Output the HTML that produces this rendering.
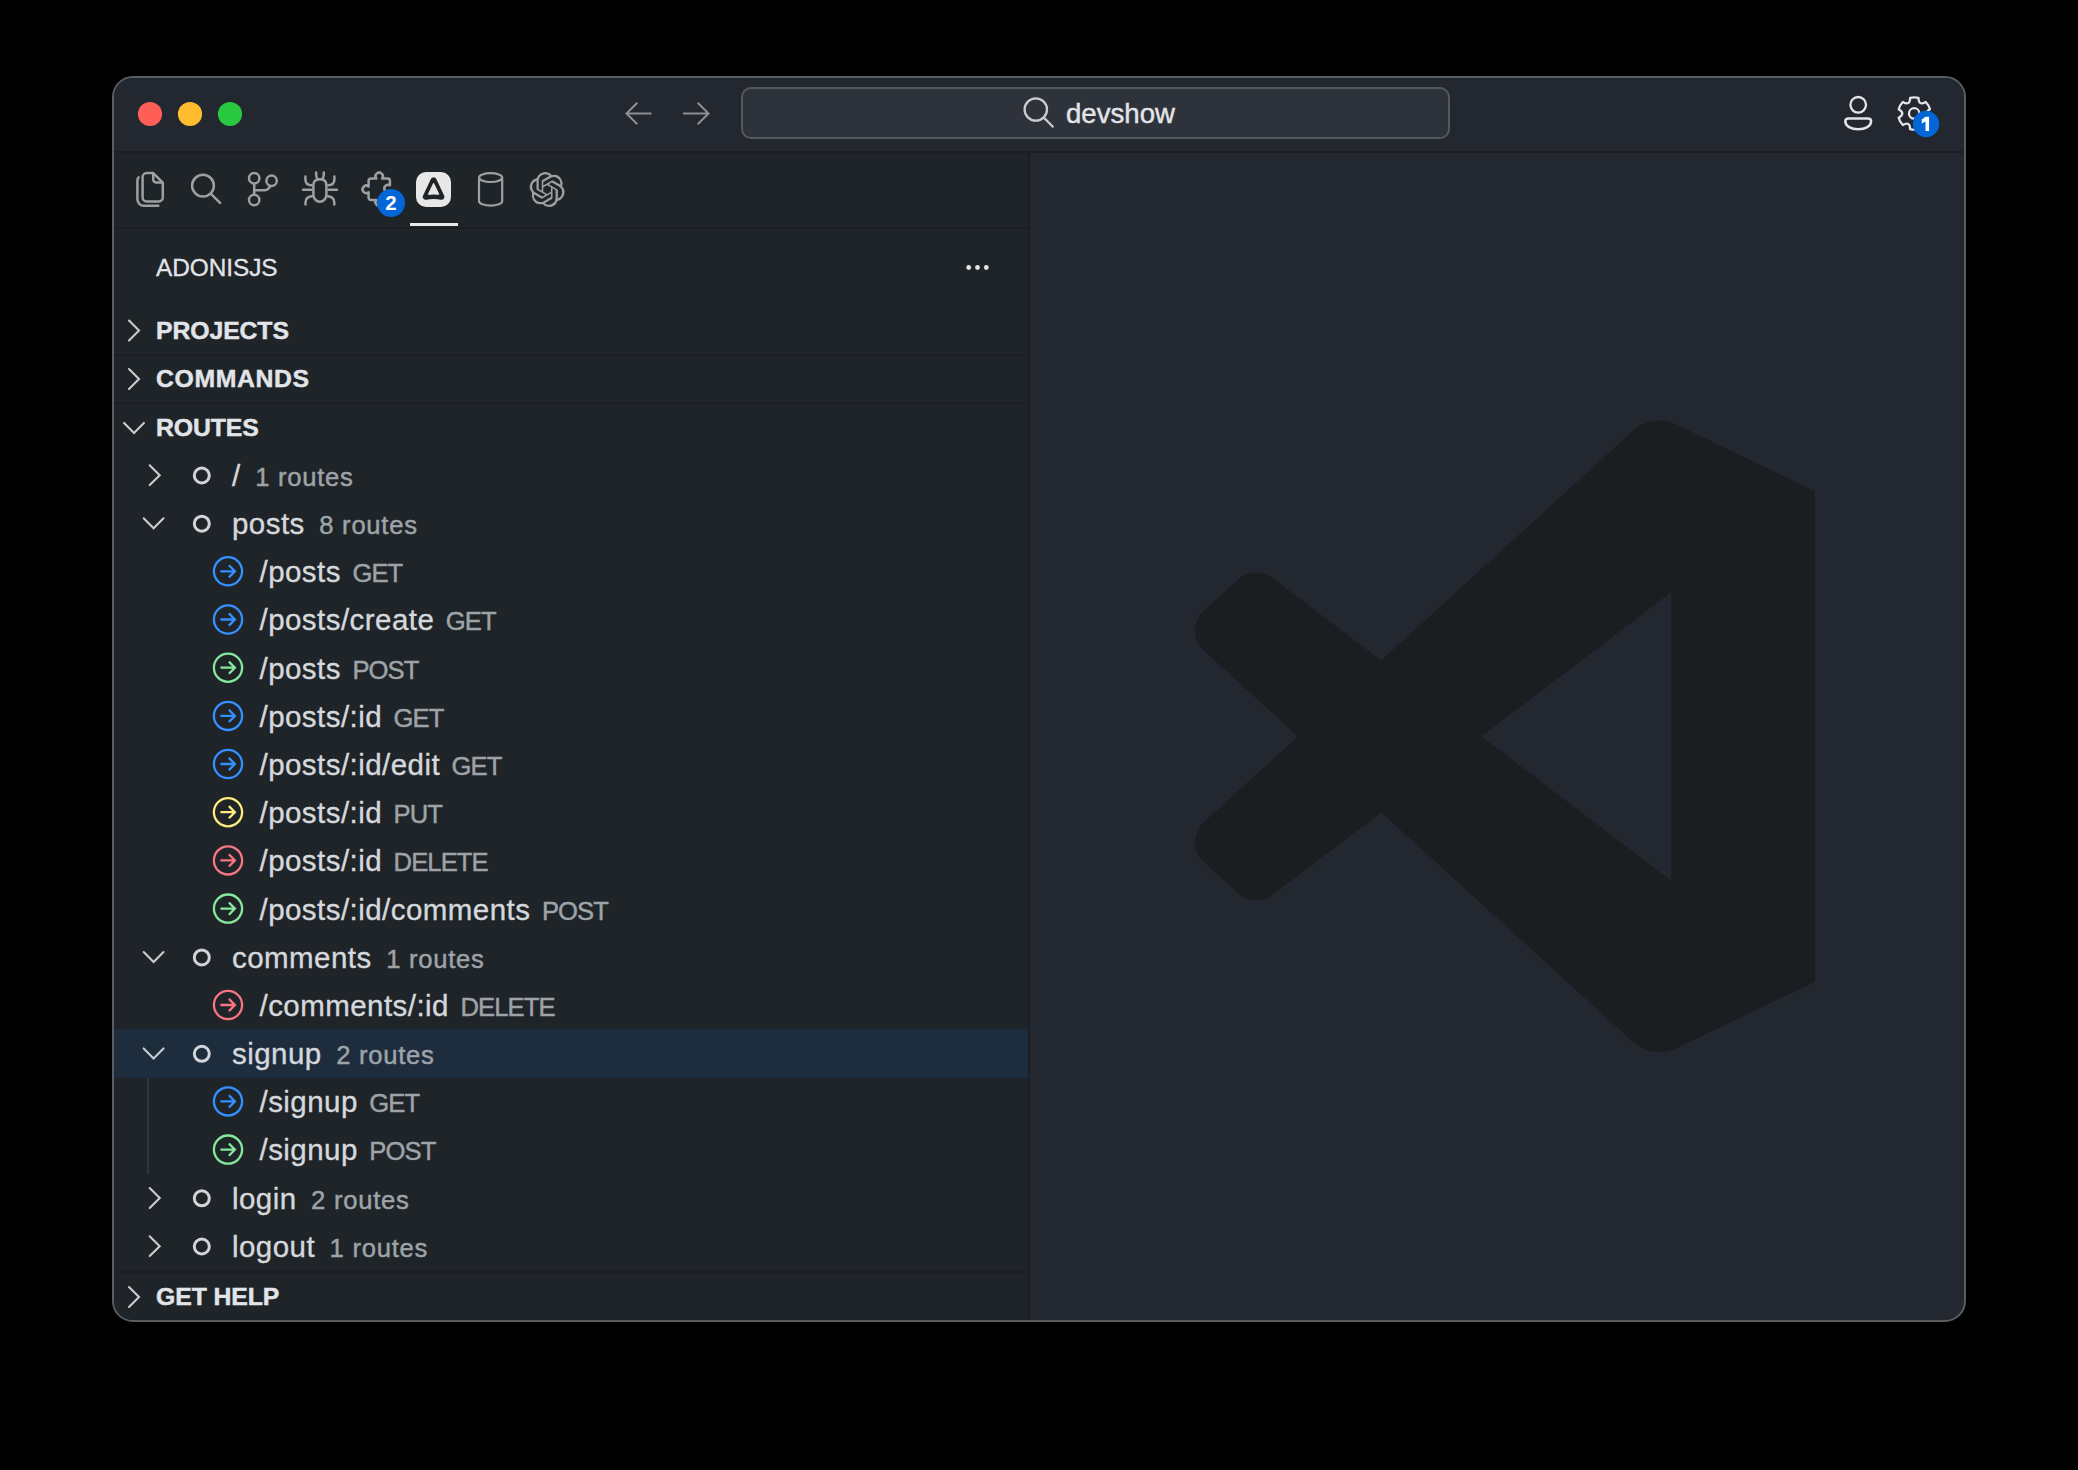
<!DOCTYPE html>
<html><head><meta charset="utf-8"><style>
html,body{margin:0;padding:0;background:#000;width:2078px;height:1470px;overflow:hidden}
*{box-sizing:border-box}
body{font-family:"Liberation Sans", sans-serif}
#win{position:absolute;left:112px;top:76px;width:1854px;height:1246px;border:2px solid #595d62;border-radius:21px;overflow:hidden;background:#23272f}
#in{position:absolute;left:-114px;top:-78px;width:2078px;height:1470px}
#in div{font-family:"Liberation Sans", sans-serif}
</style></head><body>
<div id="win"><div id="in">
<div style="position:absolute;left:114px;top:78px;width:1850px;height:73px;background:#23272f"></div>
<div style="position:absolute;left:114px;top:151px;width:1850px;height:2px;background:#1b1f23"></div>
<div style="position:absolute;left:114px;top:153px;width:914px;height:1167px;background:#1f2428"></div>
<div style="position:absolute;left:1028px;top:153px;width:2px;height:1167px;background:#1b1f23"></div>
<div style="position:absolute;left:114px;top:227px;width:914px;height:2px;background:#1b1f23"></div>
<div style="position:absolute;left:114px;top:354px;width:914px;height:1.5px;background:#1b1f23"></div>
<div style="position:absolute;left:114px;top:402px;width:914px;height:1.5px;background:#1b1f23"></div>
<div style="position:absolute;left:114px;top:1271px;width:914px;height:1.5px;background:#1b1f23"></div>
<div style="position:absolute;left:741px;top:87px;width:709px;height:52px;border:2px solid #54585f;border-radius:10px;background:#2e323a"></div>
<div style="position:absolute;left:114px;top:1029.38px;width:914px;height:48.19px;background:#1d2d3e"></div>
<div style="position:absolute;left:1066px;top:83.60px;height:60px;line-height:60px;font-size:27.6px;font-weight:400;color:#e1e4e8;white-space:nowrap;letter-spacing:0px;-webkit-text-stroke:0.45px #e1e4e8">devshow</div>
<div style="position:absolute;left:156px;top:237.80px;height:60px;line-height:60px;font-size:24.4px;font-weight:400;color:#e1e4e8;white-space:nowrap;letter-spacing:-0.05px;-webkit-text-stroke:0.3px #e1e4e8">ADONISJS</div>
<div style="position:absolute;left:156px;top:300.90px;height:60px;line-height:60px;font-size:24.8px;font-weight:700;color:#e1e4e8;white-space:nowrap;letter-spacing:-0.1px;-webkit-text-stroke:0.45px #e1e4e8">PROJECTS</div>
<div style="position:absolute;left:156px;top:349.10px;height:60px;line-height:60px;font-size:24.8px;font-weight:700;color:#e1e4e8;white-space:nowrap;letter-spacing:0.6px;-webkit-text-stroke:0.45px #e1e4e8">COMMANDS</div>
<div style="position:absolute;left:156px;top:397.60px;height:60px;line-height:60px;font-size:24.8px;font-weight:700;color:#e1e4e8;white-space:nowrap;letter-spacing:-0.1px;-webkit-text-stroke:0.45px #e1e4e8">ROUTES</div>
<div style="position:absolute;left:156px;top:1267.10px;height:60px;line-height:60px;font-size:24.8px;font-weight:700;color:#e1e4e8;white-space:nowrap;letter-spacing:-0.1px;-webkit-text-stroke:0.45px #e1e4e8">GET HELP</div>
<div style="position:absolute;left:232px;top:445.80px;height:60px;line-height:60px;white-space:nowrap;color:#d5d8dc"><span style="font-size:29.5px;letter-spacing:0.45px;-webkit-text-stroke:0.35px #d5d8dc">/</span><span style="font-size:25.6px;color:#9ea3a8;margin-left:14.5px;letter-spacing:0.75px;-webkit-text-stroke:0.45px #9ea3a8">1 routes</span></div><div style="position:absolute;left:232px;top:493.99px;height:60px;line-height:60px;white-space:nowrap;color:#d5d8dc"><span style="font-size:29.5px;letter-spacing:0.45px;-webkit-text-stroke:0.35px #d5d8dc">posts</span><span style="font-size:25.6px;color:#9ea3a8;margin-left:14.5px;letter-spacing:0.75px;-webkit-text-stroke:0.45px #9ea3a8">8 routes</span></div><div style="position:absolute;left:259.5px;top:542.18px;height:60px;line-height:60px;white-space:nowrap;color:#d5d8dc"><span style="font-size:29.5px;letter-spacing:0.45px;-webkit-text-stroke:0.35px #d5d8dc">/posts</span><span style="font-size:25.6px;color:#9ea3a8;margin-left:11.5px;letter-spacing:-0.9px;-webkit-text-stroke:0.45px #9ea3a8">GET</span></div><div style="position:absolute;left:259.5px;top:590.37px;height:60px;line-height:60px;white-space:nowrap;color:#d5d8dc"><span style="font-size:29.5px;letter-spacing:0.45px;-webkit-text-stroke:0.35px #d5d8dc">/posts/create</span><span style="font-size:25.6px;color:#9ea3a8;margin-left:11.5px;letter-spacing:-0.9px;-webkit-text-stroke:0.45px #9ea3a8">GET</span></div><div style="position:absolute;left:259.5px;top:638.56px;height:60px;line-height:60px;white-space:nowrap;color:#d5d8dc"><span style="font-size:29.5px;letter-spacing:0.45px;-webkit-text-stroke:0.35px #d5d8dc">/posts</span><span style="font-size:25.6px;color:#9ea3a8;margin-left:11.5px;letter-spacing:-0.9px;-webkit-text-stroke:0.45px #9ea3a8">POST</span></div><div style="position:absolute;left:259.5px;top:686.75px;height:60px;line-height:60px;white-space:nowrap;color:#d5d8dc"><span style="font-size:29.5px;letter-spacing:0.45px;-webkit-text-stroke:0.35px #d5d8dc">/posts/:id</span><span style="font-size:25.6px;color:#9ea3a8;margin-left:11.5px;letter-spacing:-0.9px;-webkit-text-stroke:0.45px #9ea3a8">GET</span></div><div style="position:absolute;left:259.5px;top:734.94px;height:60px;line-height:60px;white-space:nowrap;color:#d5d8dc"><span style="font-size:29.5px;letter-spacing:0.45px;-webkit-text-stroke:0.35px #d5d8dc">/posts/:id/edit</span><span style="font-size:25.6px;color:#9ea3a8;margin-left:11.5px;letter-spacing:-0.9px;-webkit-text-stroke:0.45px #9ea3a8">GET</span></div><div style="position:absolute;left:259.5px;top:783.13px;height:60px;line-height:60px;white-space:nowrap;color:#d5d8dc"><span style="font-size:29.5px;letter-spacing:0.45px;-webkit-text-stroke:0.35px #d5d8dc">/posts/:id</span><span style="font-size:25.6px;color:#9ea3a8;margin-left:11.5px;letter-spacing:-0.9px;-webkit-text-stroke:0.45px #9ea3a8">PUT</span></div><div style="position:absolute;left:259.5px;top:831.32px;height:60px;line-height:60px;white-space:nowrap;color:#d5d8dc"><span style="font-size:29.5px;letter-spacing:0.45px;-webkit-text-stroke:0.35px #d5d8dc">/posts/:id</span><span style="font-size:25.6px;color:#9ea3a8;margin-left:11.5px;letter-spacing:-0.9px;-webkit-text-stroke:0.45px #9ea3a8">DELETE</span></div><div style="position:absolute;left:259.5px;top:879.51px;height:60px;line-height:60px;white-space:nowrap;color:#d5d8dc"><span style="font-size:29.5px;letter-spacing:0.45px;-webkit-text-stroke:0.35px #d5d8dc">/posts/:id/comments</span><span style="font-size:25.6px;color:#9ea3a8;margin-left:11.5px;letter-spacing:-0.9px;-webkit-text-stroke:0.45px #9ea3a8">POST</span></div><div style="position:absolute;left:232px;top:927.70px;height:60px;line-height:60px;white-space:nowrap;color:#d5d8dc"><span style="font-size:29.5px;letter-spacing:0.45px;-webkit-text-stroke:0.35px #d5d8dc">comments</span><span style="font-size:25.6px;color:#9ea3a8;margin-left:14.5px;letter-spacing:0.75px;-webkit-text-stroke:0.45px #9ea3a8">1 routes</span></div><div style="position:absolute;left:259.5px;top:975.89px;height:60px;line-height:60px;white-space:nowrap;color:#d5d8dc"><span style="font-size:29.5px;letter-spacing:0.45px;-webkit-text-stroke:0.35px #d5d8dc">/comments/:id</span><span style="font-size:25.6px;color:#9ea3a8;margin-left:11.5px;letter-spacing:-0.9px;-webkit-text-stroke:0.45px #9ea3a8">DELETE</span></div><div style="position:absolute;left:232px;top:1024.08px;height:60px;line-height:60px;white-space:nowrap;color:#d5d8dc"><span style="font-size:29.5px;letter-spacing:0.45px;-webkit-text-stroke:0.35px #d5d8dc">signup</span><span style="font-size:25.6px;color:#9ea3a8;margin-left:14.5px;letter-spacing:0.75px;-webkit-text-stroke:0.45px #9ea3a8">2 routes</span></div><div style="position:absolute;left:259.5px;top:1072.27px;height:60px;line-height:60px;white-space:nowrap;color:#d5d8dc"><span style="font-size:29.5px;letter-spacing:0.45px;-webkit-text-stroke:0.35px #d5d8dc">/signup</span><span style="font-size:25.6px;color:#9ea3a8;margin-left:11.5px;letter-spacing:-0.9px;-webkit-text-stroke:0.45px #9ea3a8">GET</span></div><div style="position:absolute;left:259.5px;top:1120.46px;height:60px;line-height:60px;white-space:nowrap;color:#d5d8dc"><span style="font-size:29.5px;letter-spacing:0.45px;-webkit-text-stroke:0.35px #d5d8dc">/signup</span><span style="font-size:25.6px;color:#9ea3a8;margin-left:11.5px;letter-spacing:-0.9px;-webkit-text-stroke:0.45px #9ea3a8">POST</span></div><div style="position:absolute;left:232px;top:1168.65px;height:60px;line-height:60px;white-space:nowrap;color:#d5d8dc"><span style="font-size:29.5px;letter-spacing:0.45px;-webkit-text-stroke:0.35px #d5d8dc">login</span><span style="font-size:25.6px;color:#9ea3a8;margin-left:14.5px;letter-spacing:0.75px;-webkit-text-stroke:0.45px #9ea3a8">2 routes</span></div><div style="position:absolute;left:232px;top:1216.84px;height:60px;line-height:60px;white-space:nowrap;color:#d5d8dc"><span style="font-size:29.5px;letter-spacing:0.45px;-webkit-text-stroke:0.35px #d5d8dc">logout</span><span style="font-size:25.6px;color:#9ea3a8;margin-left:14.5px;letter-spacing:0.75px;-webkit-text-stroke:0.45px #9ea3a8">1 routes</span></div>
<svg width="2078" height="1470" style="position:absolute;left:0;top:0">
<defs><clipPath id="lpclip"><rect x="1030" y="153" width="785" height="1167"/></clipPath></defs>
<g clip-path="url(#lpclip)"><path d="M100 12.51 75.86.87a6.23 6.23 0 0 0-7.1 1.2L29.35 38.04 12.18 25.01a4.16 4.16 0 0 0-5.32.24l-5.5 5a4.17 4.17 0 0 0 0 6.16L16.24 50 1.36 63.58a4.17 4.17 0 0 0 0 6.16l5.5 5a4.16 4.16 0 0 0 5.32.24l17.17-13.03 39.41 35.97a6.22 6.22 0 0 0 7.1 1.2L100 87.52V12.51zM75.02 72.7 45.11 50l29.91-22.7z" transform="translate(1194.9 419.0) scale(6.348)" fill="#1b1e21" fill-rule="evenodd"/></g>
<!-- traffic lights -->
<circle cx="150" cy="114" r="12.1" fill="#ff5f57"/>
<circle cx="190" cy="114" r="12.1" fill="#febc2e"/>
<circle cx="230" cy="114" r="12.1" fill="#28c840"/>
<!-- nav arrows -->
<g fill="none" stroke="#8c8f93" stroke-width="2" stroke-linecap="butt">
<path d="M626.5 113.5 H651.5 M637.3 102.7 L626.5 113.5 L637.3 124.3"/>
<path d="M708.5 113.5 H683 M697.7 102.7 L708.5 113.5 L697.7 124.3"/>
</g>
<!-- magnifier -->
<g fill="none" stroke="#c9cbce" stroke-width="2.3"><circle cx="1035.8" cy="109.5" r="11.2"/><path d="M1043.8 117.6 L1053.4 127.2"/></g>
<!-- account -->
<g fill="none" stroke="#e1e4e8" stroke-width="2.3"><circle cx="1858.2" cy="104.8" r="7.8"/>
<path stroke-width="2.5" d="M1848.2 118.4 H1868.2 A2.9 2.9 0 0 1 1871.1 121.3 C1871.1 126.3 1865.3 129.3 1858.2 129.3 C1851.1 129.3 1845.3 126.3 1845.3 121.3 A2.9 2.9 0 0 1 1848.2 118.4 Z"/></g>
<!-- gear -->
<g fill="none" stroke="#e1e4e8" stroke-width="2.3" stroke-linejoin="round"><path d="M1910.11 97.85 A16.2 16.2 0 0 1 1918.49 97.85 Q1918.45 106.31 1925.76 102.04 A16.2 16.2 0 0 1 1929.95 109.31 Q1922.60 113.50 1929.95 117.69 A16.2 16.2 0 0 1 1925.76 124.96 Q1918.45 120.69 1918.49 129.15 A16.2 16.2 0 0 1 1910.11 129.15 Q1910.15 120.69 1902.84 124.96 A16.2 16.2 0 0 1 1898.65 117.69 Q1906.00 113.50 1898.65 109.31 A16.2 16.2 0 0 1 1902.84 102.04 Q1910.15 106.31 1910.11 97.85 Z"/><circle cx="1914.2" cy="113.4" r="5.2"/></g>
<circle cx="1926" cy="124" r="13.2" fill="#0366d6"/><path d="M1921.8 119.6 L1925.6 116.8 H1929.1 V131 H1925.5 V121.4 L1921.8 123.6 Z" fill="#fff"/>

<!-- activity icons -->
<g fill="none" stroke="#9da0a3" stroke-width="2.5" stroke-linejoin="round">
<path d="M146.6 173.1 H153.2 L162.8 182.7 V197.4 A4 4 0 0 1 158.8 201.4 H146.6 A4 4 0 0 1 142.6 197.4 V177.1 A4 4 0 0 1 146.6 173.1 Z"/>
<path d="M153.2 173.1 V179.5 A3 3 0 0 0 156.2 182.5 H162.8"/>
<path stroke-linecap="round" d="M138.6 177.4 Q137.4 178.6 137.4 180.6 V199.3 A6.5 6.5 0 0 0 143.9 205.8 H158.3"/>
<circle cx="203" cy="185.7" r="10.9"/><path d="M211 193.8 L220.8 203.6"/>
<circle cx="254.2" cy="178.3" r="5.2"/><circle cx="254.2" cy="200" r="5.2"/><circle cx="271.6" cy="180.8" r="5.2"/>
<path d="M254.2 183.5 V194.8 M254.2 190.3 H264.5 Q267 190.3 268.5 188.5 L270.6 185.9"/>
<path d="M313.4 185.2 Q313.4 179.3 319.9 179.3 Q326.4 179.3 326.4 185.2 V194.6 A6.5 7.2 0 0 1 313.4 194.6 Z"/>
<path stroke-linecap="round" d="M316.1 172.6 Q316 177.6 317.9 179.3 M323.8 172.6 Q323.9 177.6 322 179.3 M303 189.8 H311.5 M328.4 189.8 H337 M305.4 176.4 V179.5 Q305.5 185 311.6 185.3 M334.4 176.4 V179.5 Q334.3 185 328.2 185.3 M311.8 196.3 Q305.6 196.8 305.5 202.5 V204.5 M328 196.3 Q334.2 196.8 334.3 202.5 V204.5"/>
<path d="M370.8 178.6 H376.3 A3.7 3.7 0 1 1 382.1 178.6 H387.7 A2.2 2.2 0 0 1 389.9 180.8 V185.3 A3.7 3.7 0 1 0 389.9 191.7 V197.7 A2.2 2.2 0 0 1 387.7 199.9 H382.1 A3.7 3.7 0 1 1 376.3 199.9 H370.8 A2.2 2.2 0 0 1 368.6 197.7 V192.2 A3.7 3.7 0 1 1 368.6 186.4 V180.8 A2.2 2.2 0 0 1 370.8 178.6 Z"/>
<path stroke-width="2.2" d="M490.6 177.6 m-11.6 0 a11.6 4.4 0 1 0 23.2 0 a11.6 4.4 0 1 0 -23.2 0 M479 177.6 V201.2 A11.6 4.4 0 0 0 502.2 201.2 V177.6"/>
</g>
<!-- openai -->
<g transform="translate(529.6 172) scale(1.46)"><path d="M22.2819 9.8211a5.9847 5.9847 0 0 0-.5157-4.9108 6.0462 6.0462 0 0 0-6.5098-2.9A6.0651 6.0651 0 0 0 4.9807 4.1818a5.9847 5.9847 0 0 0-3.9977 2.9 6.0462 6.0462 0 0 0 .7427 7.0966 5.98 5.98 0 0 0 .511 4.9107 6.051 6.051 0 0 0 6.5146 2.9001A5.9847 5.9847 0 0 0 13.2599 24a6.0557 6.0557 0 0 0 5.7718-4.2058 5.9894 5.9894 0 0 0 3.9977-2.9001 6.0557 6.0557 0 0 0-.7475-7.0729zm-9.022 12.6081a4.4755 4.4755 0 0 1-2.8764-1.0408l.1419-.0804 4.7783-2.7582a.7948.7948 0 0 0 .3927-.6813v-6.7369l2.02 1.1686a.071.071 0 0 1 .038.052v5.5826a4.504 4.504 0 0 1-4.4945 4.4944zm-9.6607-4.1254a4.4708 4.4708 0 0 1-.5346-3.0137l.142.0852 4.783 2.7582a.7712.7712 0 0 0 .7806 0l5.8428-3.3685v2.3324a.0804.0804 0 0 1-.0332.0615L9.74 19.9502a4.4992 4.4992 0 0 1-6.1408-1.6464zM2.3408 7.8956a4.485 4.485 0 0 1 2.3655-1.9728V11.6a.7664.7664 0 0 0 .3879.6765l5.8144 3.3543-2.0201 1.1685a.0757.0757 0 0 1-.071 0l-4.8303-2.7865A4.504 4.504 0 0 1 2.3408 7.872zm16.5963 3.8558L13.1038 8.364 15.1192 7.2a.0757.0757 0 0 1 .071 0l4.8303 2.7913a4.4944 4.4944 0 0 1-.6765 8.1042v-5.6772a.79.79 0 0 0-.407-.667zm2.0107-3.0231l-.142-.0852-4.7735-2.7818a.7759.7759 0 0 0-.7854 0L9.409 9.2297V6.8974a.0662.0662 0 0 1 .0284-.0615l4.8303-2.7866a4.4992 4.4992 0 0 1 6.6802 4.66zM8.3065 12.863l-2.02-1.1638a.0804.0804 0 0 1-.038-.0567V6.0742a4.4992 4.4992 0 0 1 7.3757-3.4537l-.142.0805L8.704 5.459a.7948.7948 0 0 0-.3927.6813zm1.0976-2.3654l2.602-1.4998 2.6069 1.4998v2.9994l-2.5974 1.4997-2.6067-1.4997Z" fill="#9da0a3"/></g>
<!-- adonis -->
<rect x="416" y="172" width="35" height="35" rx="10" fill="#e7e7e7"/>
<path d="M433.6 180.4 L425.8 196.8 Q433.6 195.2 441.4 196.8 Z" fill="#1f2428" stroke="#1f2428" stroke-width="6" stroke-linejoin="round"/><path d="M433.6 183.5 L428.5 194.3 Q433.6 193.6 438.7 194.3 Z" fill="#e7e7e7" stroke="#e7e7e7" stroke-width="1.1" stroke-linejoin="round"/>
<circle cx="391" cy="203" r="14" fill="#0366d6"/>

<rect x="410" y="223" width="48" height="3" fill="#e7e7e7"/>
<!-- ellipsis -->
<circle cx="968.7" cy="267.5" r="2.4" fill="#e1e4e8"/><circle cx="977.5" cy="267.5" r="2.4" fill="#e1e4e8"/><circle cx="986.3" cy="267.5" r="2.4" fill="#e1e4e8"/>
<!-- section chevrons -->
<path d="M129.0 320.6 L139.0 330.5 L129.0 340.4" fill="none" stroke="#c9ccd0" stroke-width="2.1" stroke-linecap="round"/>
<path d="M129.0 369.1 L139.0 379.0 L129.0 388.9" fill="none" stroke="#c9ccd0" stroke-width="2.1" stroke-linecap="round"/>
<path d="M124.1 422.9 L134.0 432.9 L143.9 422.9" fill="none" stroke="#c9ccd0" stroke-width="2.1" stroke-linecap="round"/>
<path d="M129.0 1287.1 L139.0 1297.0 L129.0 1306.9" fill="none" stroke="#c9ccd0" stroke-width="2.1" stroke-linecap="round"/>
<path d="M149.7 465.3 L159.7 475.2 L149.7 485.1" fill="none" stroke="#c9ccd0" stroke-width="2.1" stroke-linecap="round"/><circle cx="201.8" cy="475.5" r="7.5" fill="none" stroke="#d1d5da" stroke-width="3"/><path d="M143.7 518.3 L153.6 528.3 L163.5 518.3" fill="none" stroke="#c9ccd0" stroke-width="2.1" stroke-linecap="round"/><circle cx="201.8" cy="523.7" r="7.5" fill="none" stroke="#d1d5da" stroke-width="3"/><g transform="translate(228 571.3)" fill="none" stroke="#3590ff" stroke-width="2.3"><circle r="14.1"/><path d="M-7.6 0 H6.4 M0.9 -6.1 L6.9 0 L0.9 6.1"/></g><g transform="translate(228 619.5)" fill="none" stroke="#3590ff" stroke-width="2.3"><circle r="14.1"/><path d="M-7.6 0 H6.4 M0.9 -6.1 L6.9 0 L0.9 6.1"/></g><g transform="translate(228 667.7)" fill="none" stroke="#85e89d" stroke-width="2.3"><circle r="14.1"/><path d="M-7.6 0 H6.4 M0.9 -6.1 L6.9 0 L0.9 6.1"/></g><g transform="translate(228 715.9)" fill="none" stroke="#3590ff" stroke-width="2.3"><circle r="14.1"/><path d="M-7.6 0 H6.4 M0.9 -6.1 L6.9 0 L0.9 6.1"/></g><g transform="translate(228 764.0)" fill="none" stroke="#3590ff" stroke-width="2.3"><circle r="14.1"/><path d="M-7.6 0 H6.4 M0.9 -6.1 L6.9 0 L0.9 6.1"/></g><g transform="translate(228 812.2)" fill="none" stroke="#ffea7f" stroke-width="2.3"><circle r="14.1"/><path d="M-7.6 0 H6.4 M0.9 -6.1 L6.9 0 L0.9 6.1"/></g><g transform="translate(228 860.4)" fill="none" stroke="#f97583" stroke-width="2.3"><circle r="14.1"/><path d="M-7.6 0 H6.4 M0.9 -6.1 L6.9 0 L0.9 6.1"/></g><g transform="translate(228 908.6)" fill="none" stroke="#85e89d" stroke-width="2.3"><circle r="14.1"/><path d="M-7.6 0 H6.4 M0.9 -6.1 L6.9 0 L0.9 6.1"/></g><path d="M143.7 952.0 L153.6 962.0 L163.5 952.0" fill="none" stroke="#c9ccd0" stroke-width="2.1" stroke-linecap="round"/><circle cx="201.8" cy="957.4" r="7.5" fill="none" stroke="#d1d5da" stroke-width="3"/><g transform="translate(228 1005.0)" fill="none" stroke="#f97583" stroke-width="2.3"><circle r="14.1"/><path d="M-7.6 0 H6.4 M0.9 -6.1 L6.9 0 L0.9 6.1"/></g><path d="M143.7 1048.4 L153.6 1058.4 L163.5 1048.4" fill="none" stroke="#c9ccd0" stroke-width="2.1" stroke-linecap="round"/><circle cx="201.8" cy="1053.8" r="7.5" fill="none" stroke="#d1d5da" stroke-width="3"/><g transform="translate(228 1101.4)" fill="none" stroke="#3590ff" stroke-width="2.3"><circle r="14.1"/><path d="M-7.6 0 H6.4 M0.9 -6.1 L6.9 0 L0.9 6.1"/></g><g transform="translate(228 1149.6)" fill="none" stroke="#85e89d" stroke-width="2.3"><circle r="14.1"/><path d="M-7.6 0 H6.4 M0.9 -6.1 L6.9 0 L0.9 6.1"/></g><path d="M149.7 1188.1 L159.7 1198.0 L149.7 1208.0" fill="none" stroke="#c9ccd0" stroke-width="2.1" stroke-linecap="round"/><circle cx="201.8" cy="1198.3" r="7.5" fill="none" stroke="#d1d5da" stroke-width="3"/><path d="M149.7 1236.3 L159.7 1246.2 L149.7 1256.1" fill="none" stroke="#c9ccd0" stroke-width="2.1" stroke-linecap="round"/><circle cx="201.8" cy="1246.5" r="7.5" fill="none" stroke="#d1d5da" stroke-width="3"/><rect x="147" y="1077.6" width="2" height="96.4" fill="#2f363d"/>
</svg>
<div style="position:absolute;left:371px;top:183px;width:40px;height:40px;line-height:40px;text-align:center;font-size:20.5px;font-weight:700;color:#fff">2</div>

</div></div>
</body></html>
